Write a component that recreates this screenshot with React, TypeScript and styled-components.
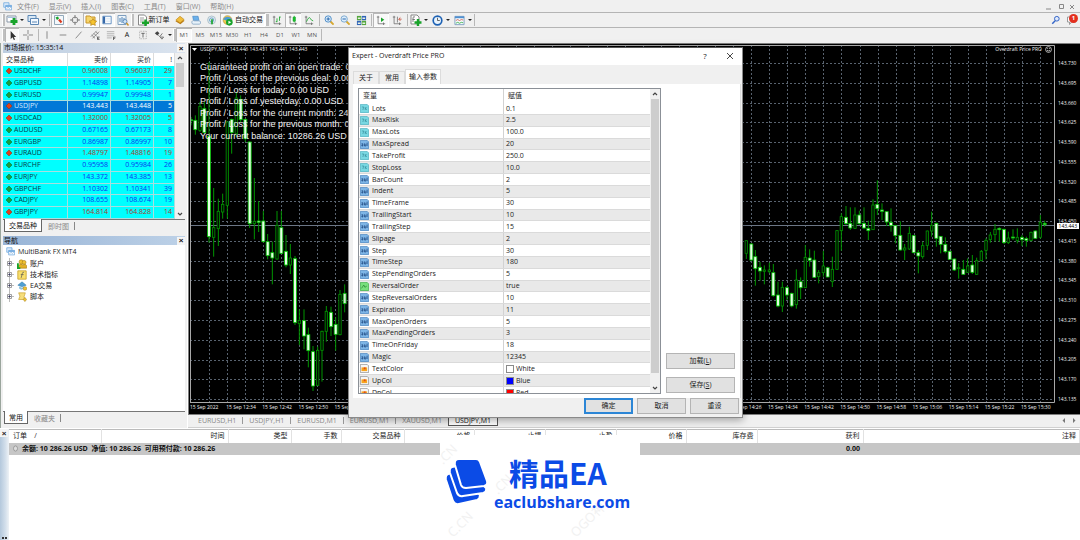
import React from 'react';
import styled, { createGlobalStyle, css } from 'styled-components';

const UI = '"Open Sans", "Noto Sans CJK SC", sans-serif';

const GlobalStyle = createGlobalStyle`
  * { box-sizing: border-box; }
  body { margin: 0; background: #f0f0f0; font: 7px/10px ${UI}; color: #222; }
  button { font: inherit; color: inherit; padding: 0; margin: 0; border: 0; background: none; white-space: nowrap; }
  table { border-collapse: collapse; border-spacing: 0; }
  th, td { padding: 0; font-weight: 400; text-align: left; white-space: nowrap; }
  ul { list-style: none; margin: 0; padding: 0; }
  svg { display: block; }
`;

/* ---------- shell ---------- */

const Shell = styled.div`
  position: relative;
  display: flex;
  flex-direction: column;
  min-height: 100vh;
  overflow: hidden;
`;

const Bar = styled.div<{ $height: number; $line?: string }>`
  display: flex;
  align-items: center;
  height: ${(p) => p.$height}px;
  padding-left: 2px;
  background: #f0f0f0;
  border-bottom: 1px solid ${(p) => p.$line || '#b4b4b4'};
`;

const MenuBar = styled(Bar)`
  color: #8a8a8a;
  gap: 5px;
  padding: 1px 4px 0 3px;
`;

const MenuItems = styled.div`
  display: flex;
  gap: 10px;
`;

const Spacer = styled.div`
  flex: 1;
`;

const Main = styled.div`
  flex: 1;
  display: grid;
  grid-template-columns: 188px minmax(0, 1fr);
`;

/* ---------- toolbars ---------- */

const Tool = styled.button<{ $w?: number; $on?: boolean }>`
  display: flex;
  align-items: center;
  justify-content: center;
  flex: none;
  width: ${(p) => p.$w || 16}px;
  height: 14px;
  color: #111;
  ${(p) =>
    p.$on &&
    css`
      background: #f9f9f9;
      box-shadow: inset 1px 1px 0 #b8b8b8, inset -1px -1px 0 #fff;
    `}
`;

const Caret = styled.span`
  flex: none;
  width: 6px;
  display: flex;
  justify-content: center;
  &::after {
    content: '';
    border: 2px solid transparent;
    border-top: 2px solid #222;
    border-bottom: 0;
  }
`;

const Divider = styled.i<{ $w: number }>`
  flex: none;
  width: ${(p) => p.$w}px;
  height: 12px;
  background: linear-gradient(#b8b8b8, #b8b8b8) center / 1px 100% no-repeat;
`;

const Grip = styled(Divider)`
  background: linear-gradient(90deg, #fff 33%, #c0c0c0 33%);
`;

const Period = styled(Tool)`
  font-size: 6px;
  color: #555;
`;

const Badge = styled.b`
  position: absolute;
  top: 14px;
  right: 2px;
  width: 9px;
  height: 9px;
  border-radius: 50%;
  background: #e3301f;
  color: #fff;
  font-size: 6px;
  line-height: 9px;
  text-align: center;
`;

const green = '#18a32a';
const ICONS: Record<string, React.ReactNode> = {
  app: (
    <>
      <path d="M1 1h7v6H1z" fill="#dcebfa" stroke="#6aa5de" />
      <path d="M3.500 4.500h8v6h-8z" fill="#fff" stroke="#6aa5de" />
      <path d="M3.500 5.500h8" stroke="#6aa5de" strokeWidth="2" />
      <path d="M5 9l1.500-2 2 1.500L10.500 7" fill="none" stroke="#5794d0" strokeWidth=".7" />
    </>
  ),
  newChart: (
    <>
      <path d="M1 2h9v6H1z" fill="#fff" stroke="#8a98a8" />
      <path d="M2 3.500h7" stroke="#a9c3dd" />
      <path d="M8 4v7M4.500 7.500h7" stroke={green} strokeWidth="2.800" />
    </>
  ),
  profiles: (
    <>
      <path d="M1 1.500h8v6H1z" fill="#d9e8f5" stroke="#5b87b5" />
      <path d="M3.500 4.500h8v6h-8z" fill="#f4f9ff" stroke="#5b87b5" />
      <path d="M5 8h5" stroke="#5b87b5" />
    </>
  ),
  market: (
    <>
      <path d="M1.500 1.500h9v9h-9z" fill="#f4f8fb" stroke="#93a9bb" />
      <path d="M2.500 3.500L5 2.500l1 2-2 1.500z" fill={green} />
      <path d="M6 5.500l2.500 3" stroke="#d93c20" strokeWidth="2.200" />
    </>
  ),
  target: (
    <>
      <circle cx="6" cy="6" r="3.500" fill="none" stroke="#777" />
      <path d="M6 0v4M6 8v4M0 6h4M8 6h4" stroke="#666" />
    </>
  ),
  navigator: (
    <>
      <path d="M1 2h4l1 1h4v6H1z" fill="#f6d56a" stroke="#c9952a" />
      <path d="M8 4.500l1.200 2.200 2.500.4-1.800 1.800.4 2.500L8 10.200l-2.300 1.200.4-2.500-1.800-1.800 2.500-.4z" fill="#f7c530" stroke="#b88417" strokeWidth=".7" />
    </>
  ),
  terminal: (
    <>
      <path d="M1 1.500h10v9H1z" fill="#fff" stroke="#4c7fb8" />
      <path d="M2.500 2v8" stroke="#3467a8" strokeWidth="2.500" />
      <path d="M5 4h5M5 6h5M5 8h5" stroke="#b9d2ea" strokeWidth=".6" />
    </>
  ),
  tester: (
    <>
      <path d="M1 1.500h8v9H1z" fill="#eef5fb" stroke="#7f9fbf" />
      <path d="M3 8V4M5 9V3M7 7V4" stroke="#4f82b5" />
      <circle cx="8" cy="7.500" r="2" fill="#cfe4f6" stroke="#4f82b5" strokeWidth=".8" />
      <path d="M9.500 9l2 2.500" stroke="#c9952a" strokeWidth="1.500" />
    </>
  ),
  order: (
    <>
      <path d="M1.500 1h6l2 2v8h-8z" fill="#fff" stroke="#888" />
      <path d="M3 4h4M3 6h4M3 8h2" stroke="#777" strokeWidth=".7" />
      <path d="M8.500 5.500v6.500M5 8.800h7" stroke={green} strokeWidth="2.400" />
    </>
  ),
  gold: (
    <>
      <path d="M.5 7.500l6 3.500 5-4-5.500-3z" fill="#b97a14" />
      <path d="M1 6l5-4.500 5 4-5 4z" fill="#f1bd3c" stroke="#c08a1c" strokeWidth=".8" />
    </>
  ),
  signals: (
    <>
      <path d="M2 1.500h6.500l1 5H3z" fill="#6bb0ea" stroke="#3a7fc0" strokeWidth=".7" />
      <path d="M1 9a2 2 0 0 1 3-2h5a2 2 0 0 1 1 4H2.500A2 2 0 0 1 1 9z" fill="#e7f1fa" stroke="#6f95b8" strokeWidth=".8" />
    </>
  ),
  radio: (
    <>
      <circle cx="5.500" cy="6" r="4.800" fill="#dfe9ee" stroke="#a6bcc8" />
      <circle cx="5.500" cy="6" r="2.500" fill="none" stroke="#5f9cc8" />
      <path d="M6 5v6" stroke={green} strokeWidth="2" />
    </>
  ),
  auto: (
    <>
      <circle cx="6" cy="5.500" r="4.800" fill="#f0c851" stroke="#a8892e" strokeWidth=".6" />
      <path d="M1 4.500Q6-.5 11 4.500L6 6.500z" fill="#4d9bd3" />
      <circle cx="8" cy="8" r="3.600" fill={green} />
      <path d="M7 6.200l3 1.800-3 1.800z" fill="#fff" />
    </>
  ),
  bars: (
    <>
      <path d="M2.500 1v9.500H11M1 2.500h3M9 9v3" fill="none" stroke="#666" strokeWidth=".9" />
      <path d="M6 8.500V4M9 7V2M9 2.500h1.500M4.500 8H6" stroke={green} />
    </>
  ),
  candles: (
    <>
      <path d="M2.500 1v9.500H11M1 2.500h3M9 9v3" fill="none" stroke="#666" strokeWidth=".9" />
      <path d="M7.500 1v8" stroke={green} />
      <path d="M6 2.500h3v5H6z" fill="#19c02c" stroke={green} strokeWidth=".6" />
    </>
  ),
  line: (
    <>
      <path d="M2.500 1v9.500H11M1 2.500h3M9 9v3" fill="none" stroke="#666" strokeWidth=".9" />
      <path d="M3 8Q6 1 7.500 4T11 7" fill="none" stroke={green} />
    </>
  ),
  zoomIn: (
    <>
      <path d="M7.500 7.500l4 4" stroke="#d6a72f" strokeWidth="2.200" />
      <circle cx="5" cy="4.800" r="3.800" fill="#dcedfb" stroke="#3a7fc0" />
      <path d="M3 4.800h4M5 2.800v4" stroke="#2a69ae" strokeWidth="1.200" />
    </>
  ),
  zoomOut: (
    <>
      <path d="M7.500 7.500l4 4" stroke="#d6a72f" strokeWidth="2.200" />
      <circle cx="5" cy="4.800" r="3.800" fill="#dcedfb" stroke="#6e9fc9" />
      <path d="M3 4.800h4" stroke="#2a69ae" strokeWidth="1.200" />
    </>
  ),
  tile: (
    <>
      <path d="M1 1h4.700v4.700H1z" fill="#53a53c" />
      <path d="M6.300 1H11v4.700H6.300z" fill="#2f63b8" />
      <path d="M1 6.300h4.700V11H1z" fill="#2f63b8" />
      <path d="M6.300 6.300H11V11H6.300z" fill="#53a53c" />
      <path d="M2 3.500h3M7 3.500h3M2 9h3M7 9h3" stroke="#e5f0e2" strokeWidth="1.500" />
    </>
  ),
  scroll: (
    <>
      <path d="M2.500 1v9.500H11M1 2.500h3M9 9v3" fill="none" stroke="#666" strokeWidth=".9" />
      <path d="M6 3l4 2.800L6 8.500z" fill={green} />
    </>
  ),
  shift: (
    <>
      <path d="M2.500 1v9.500H11M1 2.500h3M9 9v3M6.500 2v7" fill="none" stroke="#666" strokeWidth=".9" />
      <path d="M11.500 5H8.500M10 3L8 5l2 2" fill="none" stroke="#c8452e" />
    </>
  ),
  indicators: (
    <>
      <path d="M1 1h6l2 2v7H1z" fill="#fff" stroke="#888" />
      <path d="M3 8V4q0-2 2-1M2.500 5.500H5" fill="none" stroke="#666" strokeWidth=".8" />
      <path d="M8 5v7M4.500 8.500h7" stroke={green} strokeWidth="2.400" />
    </>
  ),
  clock: (
    <>
      <circle cx="6" cy="6" r="4.700" fill="#e9f4fd" stroke="#1e62b4" strokeWidth="1.800" />
      <path d="M6 3v3h2.500" fill="none" stroke="#333" strokeWidth=".8" />
    </>
  ),
  template: (
    <>
      <path d="M1 1.500h10v9H1z" fill="#f5fafe" stroke="#7f9fbf" />
      <path d="M1 2.500h10" stroke="#4f8fd0" strokeWidth="2" />
      <path d="M2 6l2-1 2 1 2-1 2 .5" fill="none" stroke="#c8452e" strokeWidth=".8" />
      <path d="M2 9l2-1 2 1 2-1 2 .5" fill="none" stroke={green} strokeWidth=".8" />
    </>
  ),
  cursor: <path d="M4 1v9l2-2 1.500 3 1.300-.6L7.400 7.500H10z" fill="#333" />,
  cross: <path d="M6 0v5M6 7v5M0 6h5M7 6h5" stroke="#777" />,
  vline: <path d="M6 1.500v9" stroke="#777" />,
  hline: <path d="M2 6h8" stroke="#777" />,
  trend: <path d="M2 10l7-8" stroke="#777" />,
  channel: (
    <>
      <path d="M1 8l7-7M3 10l8-8M2 6l4 4M4.500 4l4 4M7 2l3 3" stroke="#666" strokeWidth=".8" />
      <path d="M11.500 8.500H9v3h2.500M9 10h2" fill="none" stroke="#333" strokeWidth=".8" />
    </>
  ),
  fibo: (
    <>
      <path d="M1 2h9M1 4.500h9M1 7h9M1 9.500h6" stroke="#999" strokeWidth=".8" />
      <path d="M9 12V8.500h2.500M9 10h2" fill="none" stroke="#333" strokeWidth=".8" />
    </>
  ),
  label: (
    <>
      <path d="M2 1.500h8v9H2z" fill="none" stroke="#888" strokeWidth=".8" strokeDasharray="1 1" />
      <path d="M4 4h4M6 4v5" stroke="#555" />
    </>
  ),
  arrows: (
    <>
      <path d="M1 4l3-2.500 2.500 2.500L4 6.500z" fill="#444" />
      <path d="M5 6l2 2 3-4M7.500 8.500h4L9.500 11z" stroke="#555" fill="none" strokeWidth=".9" />
    </>
  ),
  search: (
    <>
      <circle cx="7" cy="4.500" r="2.800" fill="#dfe9fb" stroke="#3566c8" strokeWidth="1.200" />
      <path d="M5 7l-3.500 3.500" stroke="#3566c8" strokeWidth="1.800" />
    </>
  ),
  chat: <path d="M1.500 3h8v5h-4l-2 2.500V8h-2z" fill="#fff" stroke="#999" />,
  accounts: (
    <>
      <circle cx="5" cy="3.500" r="2.500" fill="#f0c333" stroke="#a37a12" strokeWidth=".7" />
      <circle cx="8.500" cy="4" r="2.300" fill="#f0c333" stroke="#a37a12" strokeWidth=".7" />
      <path d="M2 11V7.500Q5 5 7 7q4-1.500 4.500 1V11z" fill="#e2b024" stroke="#a37a12" strokeWidth=".7" />
      <path d="M1 5v6h3" stroke={green} strokeWidth="2.400" fill="none" />
    </>
  ),
  fx: (
    <>
      <path d="M1 1h10v10H1z" fill="#f8df6d" stroke="#c9a12a" />
      <path d="M5 9.500L6.500 3.500Q7 2 8.500 3M4.500 5.500h3.500" fill="none" stroke="#555" strokeWidth=".8" />
    </>
  ),
  experts: (
    <>
      <path d="M1 5l5-4 5 4-5 2z" fill="#4f9fd2" stroke="#2f78a8" strokeWidth=".6" />
      <path d="M2.500 6.500L6 8l3-1.500V9L5 10.500 2.500 9z" fill="#8bbfdc" />
      <circle cx="9.500" cy="9" r="2.200" fill="#f0c333" stroke="#a37a12" strokeWidth=".6" />
    </>
  ),
  scripts: (
    <>
      <path d="M2 1h8L8.500 5.500 9 9H2l1.500-4z" fill="#f6de7c" stroke="#c9a12a" strokeWidth=".8" />
      <path d="M9.500 6.500l2 2.500-2 2.500-2-2.500z" fill="#f0c333" stroke="#a37a12" strokeWidth=".6" />
    </>
  ),
  double: (
    <>
      <path d="M.5.5h9l2 2v9H.5z" fill="#78d8e2" stroke="#4fb2c0" />
      <path d="M2.500 4h2.500L3.800 8M7 4v4M7 6.500l2-2M7.500 6l1.500 2" fill="none" stroke="#2f8796" strokeWidth=".8" />
    </>
  ),
  integer: (
    <>
      <path d="M.5.5h9l2 2v9H.5z" fill="#7db5e6" stroke="#4a86c0" />
      <path d="M2 5h1.800v3H2.500V6.500h1M6 4.500V8h1.800V5M9.500 3.500V8" fill="none" stroke="#173f78" strokeWidth=".9" />
    </>
  ),
  bool: (
    <>
      <path d="M.5.5h9l2 2v9H.5z" fill="#78e07c" stroke="#3fae49" />
      <path d="M2 8.500L5 4l1.500 3L9 5.500" fill="none" stroke="#247c2e" strokeWidth=".9" />
    </>
  ),
  color: (
    <>
      <path d="M.5.5h9l2 2v9H.5z" fill="#f6f6f6" stroke="#8d8d8d" />
      <path d="M2 4.500h7.500v5H2z" fill="#f7a51d" />
      <path d="M5 4.500h2.500v2.500H5z" fill="#e14a18" />
    </>
  ),
};

const Icon = ({ name, size = 12 }: { name: string; size?: number }) => (
  <svg width={size} height={size} viewBox="0 0 12 12" aria-hidden="true">
    {ICONS[name]}
  </svg>
);

/* ---------- docked panels ---------- */

const Dock = styled.aside`
  display: flex;
  flex-direction: column;
  min-width: 0;
  padding: 0 2px 4px 2px;
  border-left: 1px solid #9aa59c;
  border-right: 1px solid #fff;
`;

const PanelTitle = styled.div<{ $height: number; $bg: string }>`
  display: flex;
  align-items: center;
  justify-content: space-between;
  height: ${(p) => p.$height}px;
  padding: 0 0 0 1px;
  background: ${(p) => p.$bg};
  color: #111;
`;

const NavTitle = styled(PanelTitle)`
  margin-top: 4px;
`;

const Close = styled.button`
  width: 8px;
  height: 8px;
  font: 700 8px/7px "Liberation Sans", sans-serif;
  background: #f4f4f4;
`;

const PanelBody = styled.div`
  flex: 1 1 0;
  display: flex;
  min-height: 0;
  background: #fff;
  overflow: hidden;
`;

const Quotes = styled.table`
  display: block;
  flex: 1;
  thead { display: block; }
  tr {
    display: grid;
    grid-template-columns: 65px 43px 43px 1fr;
    min-height: 0;
  }
  tbody {
    display: grid;
    grid-template-rows: repeat(13, minmax(0, 1fr));
    height: 153px;
  }
  th, td {
    text-align: right;
    padding-right: 2px;
    border-right: 1px solid #dcdcdc;
    overflow: hidden;
  }
  td { border-right-color: #a8dede; }
  th { line-height: 13px; }
  th:first-child, td:first-child { text-align: left; padding-left: 3px; }
`;

const QuoteRow = styled.tr<{ $up: boolean; $selected?: boolean }>`
  background: ${(p) => (p.$selected ? '#0078d7' : '#00ffff')};
  color: ${(p) => (p.$selected ? '#fff' : p.$up ? '#0a35f0' : '#a8392c')};
  border-bottom: 1px solid #a8dede;
  td:first-child { color: ${(p) => (p.$selected ? '#d8ecff' : '#063a48')}; }
`;

const Symbol = styled.span`
  display: flex;
  align-items: center;
  gap: 2px;
`;

const Scroll = styled.div<{ $thumbTop: number; $thumb: number }>`
  position: relative;
  flex: none;
  display: flex;
  flex-direction: column;
  justify-content: space-between;
  align-items: center;
  width: 10px;
  padding: 3px 0;
  background: #f0f0f0;
  &::after {
    content: '';
    position: absolute;
    top: ${(p) => p.$thumbTop}px;
    left: 1px;
    right: 1px;
    height: ${(p) => p.$thumb}px;
    background: #cdcdcd;
  }
`;

const Chevron = ({ down }: { down?: boolean }) => (
  <svg width="6" height="4" viewBox="0 0 6 4" aria-hidden="true">
    <path d={down ? 'M1 1l2 2 2-2' : 'M1 3l2-2 2 2'} fill="none" stroke="#444" strokeWidth="1.200" />
  </svg>
);

const Tabs = styled.div`
  display: flex;
  height: 13px;
  padding-left: 1px;
  border-top: 1px solid #777;
`;

const DockTab = styled.button<{ $on?: boolean }>`
  color: ${(p) => (p.$on ? '#111' : '#888')};
  line-height: 11px;
  ${(p) =>
    p.$on
      ? css`
          margin-top: -1px;
          padding: 0 4px;
          background: #fff;
          border: 1px solid #666;
          border-top: 0;
        `
      : css`
          padding: 0 6px;
          background: linear-gradient(#888, #888) right center / 1px 8px no-repeat;
        `}
`;

const Tree = styled.ul`
  flex: 1;
  padding: 1px 3px;
`;

const TreeItem = styled.li<{ $root?: boolean }>`
  display: flex;
  align-items: center;
  gap: 3px;
  height: 11px;
  margin-bottom: ${(p) => (p.$root ? 1 : 0)}px;
  padding-left: ${(p) => (p.$root ? 0 : 1)}px;
`;

const Expander = () => (
  <svg width="7" height="11" viewBox="0 0 7 11" aria-hidden="true">
    <path d="M2.500 0v11M5 5.500h2" stroke="#aaa" strokeWidth=".8" />
    <path d="M.5 3.500h4v4h-4z" fill="#fff" stroke="#888" strokeWidth=".8" />
    <path d="M1.200 5.500h2.600M2.500 4.200v2.600" stroke="#335" strokeWidth=".8" />
  </svg>
);

/* ---------- chart ---------- */

const ChartColumn = styled.main`
  display: flex;
  flex-direction: column;
  min-width: 0;
`;

const Chart = styled.section`
  position: relative;
  flex: 1;
  display: grid;
  grid-template-columns: minmax(0, 1fr) 25px;
  grid-template-rows: minmax(0, 1fr) 11px;
  padding: 1px 0 0 1px;
  background: #000;
  border: solid #7e7e7e;
  border-width: 1px 0 1px 1px;
  color: #f0f0f0;
  font-size: 5px;
  line-height: 7px;
`;

const Plot = styled.svg`
  width: 100%;
  height: 100%;
`;

const PriceAxis = styled.div`
  display: flex;
  flex-direction: column;
  justify-content: space-between;
  padding: 15px 0 0 3px;
`;

const TimeAxis = styled.div`
  grid-column: 1 / -1;
  display: grid;
  grid-template-columns: repeat(24, minmax(0, 1fr));
  padding: 1px 23px 0 0;
  white-space: nowrap;
`;

const PriceTag = styled.div`
  position: absolute;
  top: 179px;
  right: 1px;
  padding: 0 2px;
  background: #fff;
  color: #000;
  line-height: 6px;
`;

const ChartCaption = styled.div<{ $right?: boolean }>`
  position: absolute;
  top: 2px;
  ${(p) => (p.$right ? 'right: 28px;' : 'left: 3px;')}
  display: flex;
  align-items: center;
  gap: 3px;
  white-space: pre;
`;

const Comments = styled.div`
  position: absolute;
  top: 18px;
  left: 11px;
  display: grid;
  grid-template-rows: repeat(7, 1fr);
  height: 80px;
  font: 9px/11px "Liberation Sans", sans-serif;
  color: #f2f2f2;
  white-space: nowrap;
`;

// x, high, body top, body bottom, low, kind: u = hollow, d = filled
type Candle = [number, number, number, number, number, 'u' | 'd'];

// earlier session; thirds of a pixel from (186, 42)
const EARLY: Candle[] = [
  [15, 225, 233, 236, 250, 'd'], [28, 220, 235, 263, 278, 'd'], [42, 180, 193, 265, 270, 'u'],
  [55, 180, 200, 272, 275, 'd'], [69, 60, 283, 584, 602, 'd'], [83, 438, 557, 586, 644, 'u'],
  [97, 470, 508, 560, 612, 'u'], [110, 455, 487, 510, 530, 'u'], [124, 238, 240, 490, 530, 'u'],
  [137, 230, 232, 272, 335, 'd'], [151, 150, 168, 275, 285, 'u'], [164, 160, 172, 233, 240, 'd'],
  [178, 230, 232, 290, 300, 'd'], [191, 298, 300, 545, 558, 'd'], [205, 408, 538, 545, 592, 'u'],
  [218, 477, 537, 541, 570, 'd'], [232, 507, 537, 599, 602, 'd'], [245, 576, 599, 641, 652, 'd'],
  [259, 599, 632, 648, 727, 'd'], [273, 507, 550, 651, 653, 'u'], [286, 507, 557, 634, 636, 'd'],
  [300, 579, 628, 669, 676, 'd'], [313, 606, 648, 669, 696, 'u'], [327, 642, 650, 842, 849, 'd'],
  [340, 802, 835, 845, 909, 'u'], [354, 802, 836, 882, 922, 'd'], [367, 857, 878, 926, 976, 'd'],
  [381, 912, 929, 1032, 1047, 'd'], [395, 914, 925, 1030, 1032, 'u'], [408, 866, 868, 925, 1019, 'u'],
  [421, 792, 808, 868, 899, 'u'], [435, 794, 811, 854, 882, 'd'], [449, 826, 847, 877, 926, 'd'],
  [462, 744, 757, 878, 880, 'u'], [476, 727, 754, 785, 811, 'd'],
];

// later session; thirds of a pixel from (740, 190)
const LATE: Candle[] = [
  [19, 150, 152, 190, 207, 'u'], [34, 160, 162, 210, 212, 'd'], [46, 180, 200, 236, 287, 'd'],
  [60, 216, 232, 243, 272, 'd'], [73, 226, 240, 244, 283, 'u'], [88, 218, 240, 245, 250, 'u'],
  [100, 222, 248, 317, 320, 'd'], [114, 275, 315, 348, 352, 'd'], [127, 275, 292, 348, 366, 'u'],
  [141, 288, 293, 315, 330, 'd'], [155, 308, 310, 348, 352, 'd'], [169, 238, 270, 344, 356, 'u'],
  [182, 262, 275, 293, 327, 'd'], [196, 165, 202, 293, 294, 'u'], [209, 178, 204, 211, 230, 'd'],
  [223, 182, 210, 262, 264, 'd'], [236, 240, 248, 260, 280, 'u'], [250, 183, 228, 248, 260, 'u'],
  [263, 230, 233, 261, 262, 'd'], [277, 200, 238, 275, 291, 'u'], [291, 120, 122, 238, 240, 'u'],
  [304, 70, 80, 122, 182, 'u'], [318, 48, 82, 101, 104, 'd'], [331, 52, 100, 114, 120, 'd'],
  [345, 52, 75, 115, 117, 'u'], [358, 62, 75, 101, 104, 'd'], [372, 52, 100, 114, 118, 'd'],
  [385, 92, 115, 122, 150, 'd'], [399, 28, 45, 119, 120, 'u'], [412, -29, 43, 56, 75, 'd'],
  [426, 40, 60, 64, 90, 'd'], [440, 64, 65, 96, 108, 'd'], [453, 55, 97, 107, 125, 'd'],
  [466, 105, 107, 137, 160, 'd'], [481, 94, 136, 180, 182, 'd'], [494, 162, 174, 180, 210, 'u'],
  [508, 110, 130, 177, 180, 'u'], [521, 135, 137, 188, 190, 'd'], [535, 180, 188, 198, 250, 'd'],
  [548, 155, 167, 200, 206, 'u'], [562, 122, 123, 166, 180, 'u'], [575, 65, 106, 123, 140, 'u'],
  [589, 98, 100, 145, 170, 'd'], [602, 138, 139, 163, 190, 'd'], [616, 142, 163, 185, 190, 'd'],
  [629, 182, 184, 208, 210, 'd'], [643, 205, 207, 240, 243, 'd'], [656, 220, 233, 236, 266, 'u'],
  [670, 210, 238, 253, 254, 'd'], [683, 205, 228, 247, 248, 'u'], [697, 195, 225, 247, 252, 'd'],
  [710, 203, 212, 253, 255, 'u'], [724, 180, 184, 212, 214, 'u'], [738, 145, 151, 181, 208, 'u'],
  [751, 126, 135, 149, 158, 'u'], [765, 102, 118, 134, 155, 'u'], [778, 112, 115, 119, 155, 'd'],
  [792, 116, 118, 158, 162, 'd'], [805, 125, 144, 158, 162, 'u'], [819, 118, 141, 144, 150, 'd'],
  [832, 115, 142, 152, 160, 'u'], [846, 135, 142, 149, 168, 'd'], [859, 140, 146, 151, 170, 'd'],
  [873, 125, 127, 152, 154, 'u'], [886, 121, 123, 145, 147, 'd'], [901, 75, 97, 142, 146, 'u'],
  [914, 92, 100, 104, 110, 'd'],
];

const Candles = ({ data, ox, oy }: { data: Candle[]; ox: number; oy: number }) => (
  <g>
    {data.map(([x, hi, top, bottom, lo, kind]) => {
      const cx = ox + x / 3;
      const y = (v: number) => oy + v / 3;
      return (
        <g key={x}>
          <path d={`M${cx} ${y(hi)}V${y(lo)}`} stroke="#009600" strokeWidth="1" />
          <rect
            x={cx - (kind === 'd' ? 1.5 : 1.2)}
            y={y(top)}
            width={kind === 'd' ? 3 : 2.4}
            height={Math.max(1, y(bottom) - y(top))}
            fill={kind === 'd' ? '#e4ffe4' : '#001000'}
            stroke={kind === 'd' ? '#00c000' : '#009400'}
            strokeWidth=".8"
          />
        </g>
      );
    })}
  </g>
);

const PRICES = Array.from({ length: 18 }, (_, i) => (143.73 - i * 0.035).toFixed(3));

// one label every eight minutes; the slots behind the dialog carry none
const TIMES = Array.from({ length: 24 }, (_, i) => {
  if (i === 0) return '15 Sep 2022';
  if (i > 4 && i < 15) return '';
  const m = 12 * 60 + 26 + i * 8;
  return `15 Sep ${Math.floor(m / 60)}:${String(m % 60).padStart(2, '0')}`;
});

const ChartTabs = styled.div`
  display: flex;
  align-items: flex-start;
  height: 13px;
  padding: 0 3px 0 4px;
  color: #888;
  border-bottom: 1px solid #d0d0d0;
`;

const ChartTab = styled.button<{ $on?: boolean }>`
  height: 11px;
  padding: 0 7px 0 6px;
  line-height: 12px;
  background: linear-gradient(#999, #999) right center / 1px 7px no-repeat;
  ${(p) =>
    p.$on &&
    css`
      color: #111;
      background: #fff;
      border: 1px solid #555;
      border-top: 0;
      margin-left: -1px;
      padding: 0 6px;
    `}
`;

/* ---------- dialog ---------- */

const Dialog = styled.section`
  position: absolute;
  top: 47px;
  left: 348px;
  display: flex;
  flex-direction: column;
  width: 395px;
  height: 371px;
  background: #f0f0f0;
  border: 1px solid #8a8a8a;
  border-top-color: #555;
  box-shadow: 0 2px 8px rgba(0, 0, 0, 0.35);
`;

const DialogTitle = styled.header`
  display: flex;
  align-items: center;
  height: 17px;
  padding: 0 6px 2px 3px;
  background: #fff;
  color: #222;
  button { width: 12px; margin-left: 13px; font-size: 8px; }
`;

const DialogTabs = styled.div`
  display: flex;
  align-items: flex-end;
  height: 19px;
  padding-left: 4px;
`;

const DialogTab = styled.button<{ $on?: boolean }>`
  height: ${(p) => (p.$on ? 15 : 13)}px;
  padding: 0 ${(p) => (p.$on ? 3 : 5)}px;
  background: ${(p) => (p.$on ? '#fff' : '#f0f0f0')};
  border: 1px solid #dcdcdc;
  border-bottom: 0;
`;

const DialogBody = styled.div`
  flex: 1;
  display: flex;
  gap: 5px;
  min-height: 0;
  margin: 0 1px 0 4px;
  padding: 4px 5px 4px 5px;
  background: #fff;
  border-right: 1px solid #dcdcdc;
`;

const ListBox = styled.div`
  flex: 1;
  display: flex;
  overflow: hidden;
  border: 1px solid #8b9097;
`;

const Params = styled.table`
  display: block;
  flex: 1;
  thead { display: block; }
  tr { display: grid; grid-template-columns: 145px 1fr; min-height: 0; }
  tbody { display: grid; grid-template-rows: repeat(25, minmax(0, 1fr)); height: 296px; }
  th { line-height: 14px; padding-left: 4px; }
  td { padding-left: 1px; overflow: hidden; }
  th:first-child, td:first-child { border-right: 1px solid #d2d2d2; }
  td + td { padding-left: 2px; }
`;

const ParamRow = styled.tr<{ $shaded: boolean }>`
  background: ${(p) => (p.$shaded ? '#e9e9e9' : '#fff')};
  border-bottom: 1px solid #dadada;
`;

const Cell = styled.span`
  display: flex;
  align-items: center;
  height: 11px;
  gap: 3px;
`;

const Swatch = styled.i<{ $color: string }>`
  width: 8px;
  height: 8px;
  margin-right: -1px;
  background: ${(p) => p.$color};
  border: 1px solid #8a8a8a;
`;

const Side = styled.div`
  display: flex;
  flex-direction: column;
  justify-content: flex-end;
  gap: 8px;
  padding-bottom: 1px;
`;

const PushButton = styled.button<{ $w: number; $primary?: boolean }>`
  width: ${(p) => p.$w}px;
  height: 16px;
  background: #e1e1e1;
  border: ${(p) => (p.$primary ? '2px solid #2c86d6' : '1px solid #b4b4b4')};
  line-height: 12px;
`;

const DialogFooter = styled.footer`
  display: flex;
  justify-content: flex-end;
  gap: 4px;
  height: 19px;
  padding-right: 3px;
`;

/* ---------- terminal ---------- */

const Terminal = styled.section`
  position: relative;
  display: grid;
  grid-template-columns: 9px minmax(0, 1fr);
  height: 112px;
  padding-top: 1px;
  background: #fff;
`;

const TerminalStrip = styled.div`
  display: flex;
  flex-direction: column;
  justify-content: space-between;
  background: linear-gradient(90deg, #b4c8dc, #d3dfeb 60%, #eef2f6);
  color: #222;
`;

const Orders = styled.table`
  width: 100%;
  table-layout: fixed;
  border-top: 1px solid #bbb;
  align-self: start;
  th, td { text-align: right; padding-right: 3px; }
  th { height: 13px; border-right: 1px solid #e2e2e2; }
  td { height: 12px; font-weight: 700; background: #c6c6c6; color: #111; }
  th:first-child, td:first-child { text-align: left; padding-left: 4px; }
`;

const Balance = styled.span`
  display: flex;
  align-items: center;
  gap: 4px;
  white-space: pre;
`;

const Brand = styled.div`
  position: absolute;
  top: 7px;
  left: 440px;
  isolation: isolate;
  display: grid;
  grid-template-columns: 42px auto;
  column-gap: 6px;
  align-content: start;
  width: 200px;
  height: 105px;
  padding: 18px 6px 0 6px;
  overflow: hidden;
  background: #fff;
  color: #0b4be6;
`;

const BrandText = styled.div`
  display: flex;
  flex-direction: column;
  white-space: nowrap;
`;

const BrandName = styled.strong`
  padding-left: 15px;
  font: 700 30px/38px "Noto Sans CJK SC", sans-serif;
`;

const BrandSite = styled.span`
  font: 700 16px/22px "Open Sans", sans-serif;
`;

const Watermark = styled.svg`
  position: absolute;
  inset: 0;
  z-index: -1;
  width: 200px;
  height: 105px;
`;

/* ---------- data ---------- */

const QUOTES: [string, string, string, string, boolean][] = [
  ['USDCHF', '0.96008', '0.96037', '29', false],
  ['GBPUSD', '1.14898', '1.14905', '7', true],
  ['EURUSD', '0.99947', '0.99948', '1', true],
  ['USDJPY', '143.443', '143.448', '5', false],
  ['USDCAD', '1.32000', '1.32005', '5', false],
  ['AUDUSD', '0.67165', '0.67173', '8', true],
  ['EURGBP', '0.86987', '0.86997', '10', true],
  ['EURAUD', '1.48797', '1.48816', '19', false],
  ['EURCHF', '0.95958', '0.95984', '26', true],
  ['EURJPY', '143.372', '143.385', '13', true],
  ['GBPCHF', '1.10302', '1.10341', '39', true],
  ['CADJPY', '108.655', '108.674', '19', true],
  ['GBPJPY', '164.814', '164.828', '14', false],
];

const PARAMS: [string, string, string, string?][] = [
  ['double', 'Lots', '0.1'],
  ['double', 'MaxRisk', '2.5'],
  ['double', 'MaxLots', '100.0'],
  ['integer', 'MaxSpread', '20'],
  ['double', 'TakeProfit', '250.0'],
  ['double', 'StopLoss', '10.0'],
  ['integer', 'BarCount', '2'],
  ['integer', 'Indent', '5'],
  ['integer', 'TimeFrame', '30'],
  ['integer', 'TrailingStart', '10'],
  ['integer', 'TrailingStep', '15'],
  ['integer', 'Slipage', '2'],
  ['integer', 'Step', '30'],
  ['integer', 'TimeStep', '180'],
  ['integer', 'StepPendingOrders', '5'],
  ['bool', 'ReversalOrder', 'true'],
  ['integer', 'StepReversalOrders', '10'],
  ['integer', 'Expiration', '11'],
  ['integer', 'MaxOpenOrders', '5'],
  ['integer', 'MaxPendingOrders', '3'],
  ['integer', 'TimeOnFriday', '18'],
  ['integer', 'Magic', '12345'],
  ['color', 'TextColor', 'White', '#fff'],
  ['color', 'UpCol', 'Blue', '#0000ff'],
  ['color', 'DnCol', 'Red', '#ff0000'],
];

const MENUS = ['文件(F)', '显示(V)', '插入(I)', '图表(C)', '工具(T)', '窗口(W)', '帮助(H)'];
const PERIODS = ['M1', 'M5', 'M15', 'M30', 'H1', 'H4', 'D1', 'W1', 'MN'];
const COMMENTS = [
  'Guaranteed profit on an open trade: 0',
  'Profit / Loss of the previous deal: 0.00',
  'Profit / Loss for today: 0.00 USD',
  'Profit / Loss of yesterday: 0.00 USD',
  'Profit / Loss for the current month: 24.5',
  'Profit / Loss for the previous month: 0.',
  'Your current balance: 10286.26 USD',
];
const ORDER_COLS: [string, number | undefined][] = [
  ['订单', 92], ['时间', 127], ['类型', 63], ['手数', 50], ['交易品种', 63], ['价格', 70],
  ['止损', 71], ['止盈', 71], ['价格', 70], ['库存费', 71], ['获利', 106], ['注释', undefined],
];

export default function App() {
  return (
    <Shell>
      <GlobalStyle />
      <MenuBar as="nav" $height={13}>
        <Icon name="app" size={9} />
        <MenuItems>
          {MENUS.map((m) => (
            <button key={m}>{m}</button>
          ))}
        </MenuItems>
        <Spacer />
        <svg width="32" height="8" viewBox="0 0 32 8" aria-hidden="true">
          <path d="M2 6h5M15.500 1.500h4v4h-4zM26 2l4 4M30 2l-4 4" fill="none" stroke="#888" />
        </svg>
      </MenuBar>

      <Bar $height={15}>
        <Grip $w={3} />
        <Tool $w={14} aria-label="New chart"><Icon name="newChart" /></Tool>
        <Caret />
        <Tool aria-label="Profiles"><Icon name="profiles" /></Tool>
        <Caret />
        <Divider $w={4} />
        <Tool $on aria-label="Market watch"><Icon name="market" /></Tool>
        <Tool aria-label="Data window"><Icon name="target" size={10} /></Tool>
        <Tool $on aria-label="Navigator"><Icon name="navigator" /></Tool>
        <Tool $on aria-label="Terminal"><Icon name="terminal" size={10} /></Tool>
        <Tool aria-label="Tester"><Icon name="tester" /></Tool>
        <Grip $w={3} />
        <Tool $w={38}>
          <Icon name="order" />新订单
        </Tool>
        <Tool aria-label="MetaEditor"><Icon name="gold" size={10} /></Tool>
        <Tool aria-label="Signals"><Icon name="signals" size={10} /></Tool>
        <Tool aria-label="Market"><Icon name="radio" size={10} /></Tool>
        <Tool $on $w={45}>
          <Icon name="auto" size={11} />&nbsp;自动交易
        </Tool>
        <Grip $w={4} />
        <Tool aria-label="Bar chart"><Icon name="bars" size={10} /></Tool>
        <Tool $on aria-label="Candlesticks"><Icon name="candles" size={10} /></Tool>
        <Tool aria-label="Line chart"><Icon name="line" size={10} /></Tool>
        <Divider $w={4} />
        <Tool aria-label="Zoom in"><Icon name="zoomIn" size={10} /></Tool>
        <Tool aria-label="Zoom out"><Icon name="zoomOut" size={10} /></Tool>
        <Tool aria-label="Tile windows"><Icon name="tile" size={11} /></Tool>
        <Divider $w={4} />
        <Tool $on aria-label="Auto scroll"><Icon name="scroll" size={10} /></Tool>
        <Tool aria-label="Chart shift"><Icon name="shift" size={10} /></Tool>
        <Divider $w={4} />
        <Tool $w={14} aria-label="Indicators"><Icon name="indicators" /></Tool>
        <Caret />
        <Tool aria-label="Periods"><Icon name="clock" size={11} /></Tool>
        <Caret />
        <Tool aria-label="Templates"><Icon name="template" size={11} /></Tool>
        <Caret />
        <Divider $w={2} />
        <Spacer />
        <Tool aria-label="Search"><Icon name="search" size={10} /></Tool>
        <Tool aria-label="Messages"><Icon name="chat" /></Tool>
        <Badge>1</Badge>
      </Bar>

      <Bar $height={15} $line="#f0f0f0">
        <Grip $w={3} />
        <Tool $on $w={14} aria-label="Cursor"><Icon name="cursor" size={11} /></Tool>
        <Tool $w={18} aria-label="Crosshair"><Icon name="cross" size={10} /></Tool>
        <Divider $w={2} />
        {['vline', 'hline', 'trend', 'channel', 'fibo'].map((n) => (
          <Tool key={n} aria-label={n}><Icon name={n} size={10} /></Tool>
        ))}
        <Tool>A</Tool>
        <Tool aria-label="Text label"><Icon name="label" size={10} /></Tool>
        <Tool aria-label="Arrows"><Icon name="arrows" size={10} /></Tool>
        <Caret />
        <Grip $w={3} />
        {PERIODS.map((p, i) => (
          <Period key={p} $on={i === 0}>{p}</Period>
        ))}
        <Divider $w={2} />
      </Bar>

      <Main>
        <Dock>
          <PanelTitle $height={10} $bg="linear-gradient(90deg, #bccde0, #dbe4ef)">
            市场报价: 15:35:14
            <Close aria-label="Close market watch">×</Close>
          </PanelTitle>
          <PanelBody>
            <Quotes>
              <thead>
                <tr><th>交易品种</th><th>卖价</th><th>买价</th><th>!</th></tr>
              </thead>
              <tbody>
                {QUOTES.map(([s, bid, ask, spread, up]) => (
                  <QuoteRow key={s} $up={up} $selected={s === 'USDJPY'}>
                    <td>
                      <Symbol>
                        <svg width="6" height="6" viewBox="0 0 6 6" aria-hidden="true">
                          <path d="M3 0l3 3-3 3-3-3z" fill={up ? '#18a03c' : '#e0401c'} stroke={up ? '#0a6d3a' : '#8a3a20'} strokeWidth=".6" />
                        </svg>
                        {s}
                      </Symbol>
                    </td>
                    <td>{bid}</td>
                    <td>{ask}</td>
                    <td>{spread}</td>
                  </QuoteRow>
                ))}
              </tbody>
            </Quotes>
            <Scroll $thumbTop={10} $thumb={24}>
              <Chevron />
              <Chevron down />
            </Scroll>
          </PanelBody>
          <Tabs>
            <DockTab $on>交易品种</DockTab>
            <DockTab>即时图</DockTab>
          </Tabs>
          <NavTitle $height={9} $bg="linear-gradient(90deg, #98b4d6, #bdd1e7)">
            导航
            <Close aria-label="Close navigator">×</Close>
          </NavTitle>
          <PanelBody>
            <Tree>
              <TreeItem $root><Icon name="app" size={9} />MultiBank FX MT4</TreeItem>
              {[['accounts', '账户'], ['fx', '技术指标'], ['experts', 'EA交易'], ['scripts', '脚本']].map(([icon, t]) => (
                <TreeItem key={t}>
                  <Expander />
                  <Icon name={icon} size={10} />
                  {t}
                </TreeItem>
              ))}
            </Tree>
          </PanelBody>
          <Tabs>
            <DockTab $on>常用</DockTab>
            <DockTab>收藏夹</DockTab>
          </Tabs>
        </Dock>

        <ChartColumn>
          <Chart>
            <Plot viewBox="190 45 865 358" preserveAspectRatio="none" role="img" aria-label="USDJPY M1">
              {Array.from({ length: 47 }, (_, i) => {
                const x = Math.round(209 + i * 18.07) + 0.5;
                return <path key={x} d={`M${x} 45V402`} stroke="#59636f" strokeWidth="1" strokeDasharray="2 2" />;
              })}
              {PRICES.map((p, i) => {
                const y = Math.round(63 + i * 19.77) + 0.5;
                return <path key={p} d={`M190 ${y}H1055`} stroke="#59636f" strokeWidth="1" strokeDasharray="2 2" />;
              })}
              <path d="M190 225.500H1055" stroke="#6b7686" />
              <Candles data={EARLY} ox={186} oy={42} />
              <Candles data={LATE} ox={740} oy={190} />
              <path d="M190.500 403V45.500H1054.500V402.500H190" fill="none" stroke="#a8a8a8" />
            </Plot>
            <PriceAxis>
              {PRICES.map((p) => (
                <span key={p}>{p}</span>
              ))}
            </PriceAxis>
            <TimeAxis>
              {TIMES.map((t, i) => (
                <span key={i}>{t}</span>
              ))}
            </TimeAxis>
            <PriceTag>143.443</PriceTag>
            <ChartCaption>
              <svg width="5" height="4" viewBox="0 0 5 4" aria-hidden="true">
                <path d="M0 0h5L2.500 3z" fill="#fff" />
              </svg>
              USDJPY,M1{'   '}143.446 143.451 143.441 143.443
            </ChartCaption>
            <ChartCaption $right>
              Overdraft Price PRO
              <svg width="7" height="7" viewBox="0 0 7 7" aria-hidden="true">
                <circle cx="3.500" cy="3.500" r="2.900" fill="none" stroke="#ddd" strokeWidth=".8" />
                <path d="M2 4.200q1.500 1.500 3 0M2.300 2.500h.8M4 2.500h.8" fill="none" stroke="#ddd" strokeWidth=".8" />
              </svg>
            </ChartCaption>
            <Comments>
              {COMMENTS.map((c) => (
                <span key={c}>{c}</span>
              ))}
            </Comments>
          </Chart>
          <ChartTabs>
            {['EURUSD,H1', 'USDJPY,H1', 'EURUSD,M1', 'EURUSD,M1', 'XAUUSD,M1', 'USDJPY,M1'].map((t, i) => (
              <ChartTab key={i} $on={i === 5}>{t}</ChartTab>
            ))}
            <Spacer />
            <svg width="16" height="12" viewBox="0 0 16 12" aria-hidden="true">
              <path d="M4 3v5L1.500 5.500zM12 3v5l2.500-2.500z" fill="#777" />
            </svg>
          </ChartTabs>
        </ChartColumn>
      </Main>

      <Terminal>
        <TerminalStrip>
          <Close aria-label="Close terminal">×</Close>
          <svg width="9" height="4" viewBox="0 0 9 4" aria-hidden="true">
            <path d="M2 2h2M5 2h2" stroke="#333" strokeWidth="2" />
          </svg>
        </TerminalStrip>
        <Orders>
          <colgroup>
            {ORDER_COLS.map(([, w], i) => (
              <col key={i} width={w} />
            ))}
          </colgroup>
          <thead>
            <tr>
              {ORDER_COLS.map(([t], i) => (
                <th key={i}>{i === 0 ? <>{t}&nbsp;&nbsp;&nbsp; /</> : t}</th>
              ))}
            </tr>
          </thead>
          <tbody>
            <tr>
              <td colSpan={10}>
                <Balance>
                  <svg width="5" height="7" viewBox="0 0 5 7" aria-hidden="true">
                    <ellipse cx="2.500" cy="3.500" rx="2" ry="2.600" fill="#ddd" stroke="#888" strokeWidth=".7" />
                  </svg>
                  {'余额: 10 286.26 USD  净值: 10 286.26  可用预付款: 10 286.26'}
                </Balance>
              </td>
              <td>0.00</td>
              <td />
            </tr>
          </tbody>
        </Orders>
        <Brand>
          <Watermark viewBox="0 0 200 105" aria-hidden="true">
            <g fill="#f1f1f1" fontFamily="Open Sans, Noto Sans CJK SC, sans-serif" fontSize="13" fontWeight="400">
              <text transform="translate(3 30) rotate(-45)">.CN</text>
              <text transform="translate(58 60) rotate(-45)">.CN</text>
              <text transform="translate(13 103) rotate(-45)">C.CN</text>
              <text transform="translate(136 103) rotate(-45)">OGO神</text>
            </g>
          </Watermark>
          <svg width="42" height="52" viewBox="0 0 42 52" aria-hidden="true">
            <g fill="#0b4be6" stroke="#fff" strokeWidth="2" strokeLinejoin="round">
              <path d="M2 21L13 18L34 42Q34 46 31 47L13 51Q9 52 7 48L0 27Q-1 22 2 21z" />
              <path d="M6 14L16 12L40 35Q41 39 37 40L17 43Q13 44 11 40L4 20Q3 15 6 14z" />
              <path d="M13 6H30Q33 6 34 9L41 28Q42 32 38 33L20 35Q16 35 15 32L9 12Q8 6 13 6z" />
            </g>
          </svg>
          <BrandText>
            <BrandName>精品EA</BrandName>
            <BrandSite>eaclubshare.com</BrandSite>
          </BrandText>
        </Brand>
      </Terminal>

      <Dialog role="dialog" aria-label="Expert - Overdraft Price PRO">
        <DialogTitle>
          Expert - Overdraft Price PRO
          <Spacer />
          <button aria-label="Help">?</button>
          <button aria-label="Close">
            <svg width="12" height="8" viewBox="0 0 12 8" aria-hidden="true">
              <path d="M3 1l6 6M9 1L3 7" stroke="#333" strokeWidth=".9" />
            </svg>
          </button>
        </DialogTitle>
        <DialogTabs>
          <DialogTab>关于</DialogTab>
          <DialogTab>常用</DialogTab>
          <DialogTab $on>输入参数</DialogTab>
        </DialogTabs>
        <DialogBody>
          <ListBox>
            <Params>
              <thead>
                <tr><th>变量</th><th>赋值</th></tr>
              </thead>
              <tbody>
                {PARAMS.map(([icon, name, value, color], i) => (
                  <ParamRow key={name} $shaded={i % 2 === 1}>
                    <td><Cell><Icon name={icon} size={9} />{name}</Cell></td>
                    <td><Cell>{color && <Swatch $color={color} />}{value}</Cell></td>
                  </ParamRow>
                ))}
              </tbody>
            </Params>
            <Scroll $thumbTop={10} $thumb={274}>
              <Chevron />
              <Chevron down />
            </Scroll>
          </ListBox>
          <Side>
            <PushButton $w={69}>加载(<u>L</u>)</PushButton>
            <PushButton $w={69}>保存(<u>S</u>)</PushButton>
          </Side>
        </DialogBody>
        <DialogFooter>
          <PushButton $w={49} $primary>确定</PushButton>
          <PushButton $w={49}>取消</PushButton>
          <PushButton $w={49}>重设</PushButton>
        </DialogFooter>
      </Dialog>
    </Shell>
  );
}
